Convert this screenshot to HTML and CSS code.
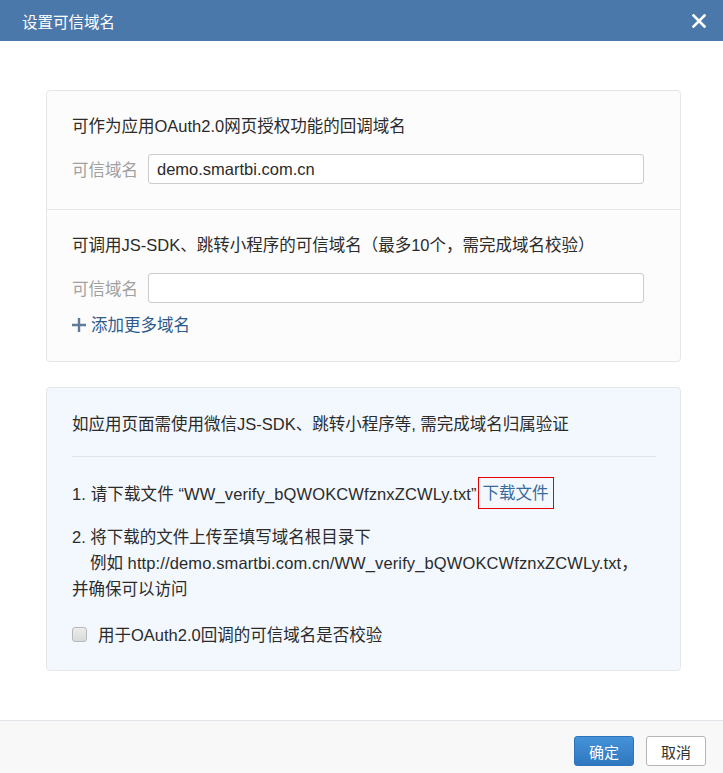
FILE: index.html
```html
<!DOCTYPE html>
<html>
<head>
<meta charset="utf-8">
<link rel="stylesheet" href="styles.css">
</head>
<body>
<div class="dialog">
  <div class="header">
    <span class="title">设置可信域名</span>
    <svg class="close" width="14" height="14" viewBox="0 0 14 14"><path d="M1.5 1.5 L12.5 12.5 M12.5 1.5 L1.5 12.5" stroke="#fff" stroke-width="2.6" stroke-linecap="square"/></svg>
  </div>
  <div class="body">
    <div class="panel">
      <div class="section">
        <div class="desc">可作为应用OAuth2.0网页授权功能的回调域名</div>
        <div class="field">
          <span class="label">可信域名</span>
          <div class="input">demo.smartbi.com.cn</div>
        </div>
      </div>
      <div class="section second">
        <div class="desc">可调用JS-SDK、跳转小程序的可信域名（最多10个，需完成域名校验）</div>
        <div class="field">
          <span class="label">可信域名</span>
          <div class="input"></div>
        </div>
        <div class="add">
          <svg class="plus" width="14" height="14" viewBox="0 0 14 14"><path d="M7 0 V14 M0 7 H14" stroke="#5f7b9c" stroke-width="2.4"/></svg>
          <span>添加更多域名</span>
        </div>
      </div>
    </div>
    <div class="panel info">
      <div class="desc">如应用页面需使用微信JS-SDK、跳转小程序等, 需完成域名归属验证</div>
      <div class="divider"></div>
      <div class="step1">
        <span class="lat">1. 请下载文件 “WW_verify_bQWOKCWfznxZCWLy.txt”</span>
        <span class="download">下载文件</span>
      </div>
      <div class="step2">
        <div>2. 将下载的文件上传至填写域名根目录下</div>
        <div class="indent">例如 <span class="lat">http://demo.smartbi.com.cn/WW_verify_bQWOKCWfznxZCWLy.txt</span>，</div>
        <div>并确保可以访问</div>
      </div>
      <div class="check">
        <span class="box"></span>
        <span>用于OAuth2.0回调的可信域名是否校验</span>
      </div>
    </div>
  </div>
  <div class="footer">
    <button class="btn primary">确定</button>
    <button class="btn">取消</button>
  </div>
</div>
</body>
</html>
```

FILE: styles.css
```css
* { box-sizing: border-box; }
html, body { margin: 0; padding: 0; }
body {
  width: 723px;
  height: 773px;
  font-family: "Liberation Sans", "Noto Sans CJK SC", sans-serif;
  font-size: 16.5px;
  color: #2b2b2b;
  background: #fff;
  overflow: hidden;
}
.dialog {
  width: 723px;
  height: 773px;
  display: flex;
  flex-direction: column;
}
.header {
  height: 41px;
  flex: none;
  background: #4b78aa;
  display: flex;
  align-items: center;
  justify-content: space-between;
  padding: 0 17px 0 22px;
}
.title {
  color: #fff;
  font-size: 15.5px;
}
.close { display: block; }
.body {
  flex: 1;
  padding: 49px 42px 0 46px;
}
.panel {
  border: 1px solid #e6e6e6;
  border-radius: 4px;
  background: #fcfcfc;
}
.section {
  padding: 25px 36px 25px 25px;
}
.section.second {
  border-top: 1px solid #e6e6e6;
  padding-bottom: 26px;
}
.desc {
  line-height: 20px;
  white-space: nowrap;
}
.field {
  display: flex;
  align-items: center;
  margin-top: 18px;
}
.label {
  color: #a0a0a0;
  width: 76px;
  flex: none;
}
.input {
  flex: 1;
  height: 30px;
  border: 1px solid #cccccc;
  border-radius: 3px;
  background: #fff;
  padding: 0 8px;
  line-height: 28px;
}
.add {
  margin-top: 12px;
  line-height: 20px;
  display: flex;
  align-items: center;
  color: #2d5b8e;
}
.plus { margin-right: 5px; display: block; }
.info {
  margin-top: 25px;
  background: #f2f8fe;
  padding: 26px 24px 23px 25px;
}
.lat { letter-spacing: 0.12px; }
.divider {
  height: 1px;
  background: #dfe4ea;
  margin-top: 22px;
}
.step1 {
  margin-top: 20px;
  height: 32px;
  display: flex;
  align-items: center;
  white-space: nowrap;
}
.download {
  border: 1px solid #e60000;
  height: 32px;
  line-height: 30px;
  padding: 0 4px;
  margin-left: 1px;
  color: #3a6a9c;
}
.step2 {
  margin-top: 15px;
  line-height: 26px;
  white-space: nowrap;
}
.indent { padding-left: 18px; }
.check {
  margin-top: 19px;
  height: 26px;
  display: flex;
  align-items: center;
}
.box {
  width: 15px;
  height: 15px;
  border: 1px solid #b8b8b8;
  border-radius: 3px;
  background: linear-gradient(#ececec, #dadada);
  margin-right: 11px;
  flex: none;
}
.footer {
  height: 53px;
  flex: none;
  border-top: 1px solid #e3e3ea;
  background: #f8f8f8;
  display: flex;
  justify-content: flex-end;
  align-items: flex-start;
  padding: 15px 17px 0 0;
  gap: 12px;
}
.btn {
  width: 60px;
  height: 30px;
  border: 1px solid #b5b5b5;
  border-radius: 3px;
  background: #fff;
  font-family: "Liberation Sans", "Noto Sans CJK SC", sans-serif;
  font-size: 15px;
  color: #333;
  padding: 0;
}
.btn.primary {
  background: linear-gradient(#4592d8, #2f78c0);
  border-color: #2e74bb;
  color: #fff;
}
```
